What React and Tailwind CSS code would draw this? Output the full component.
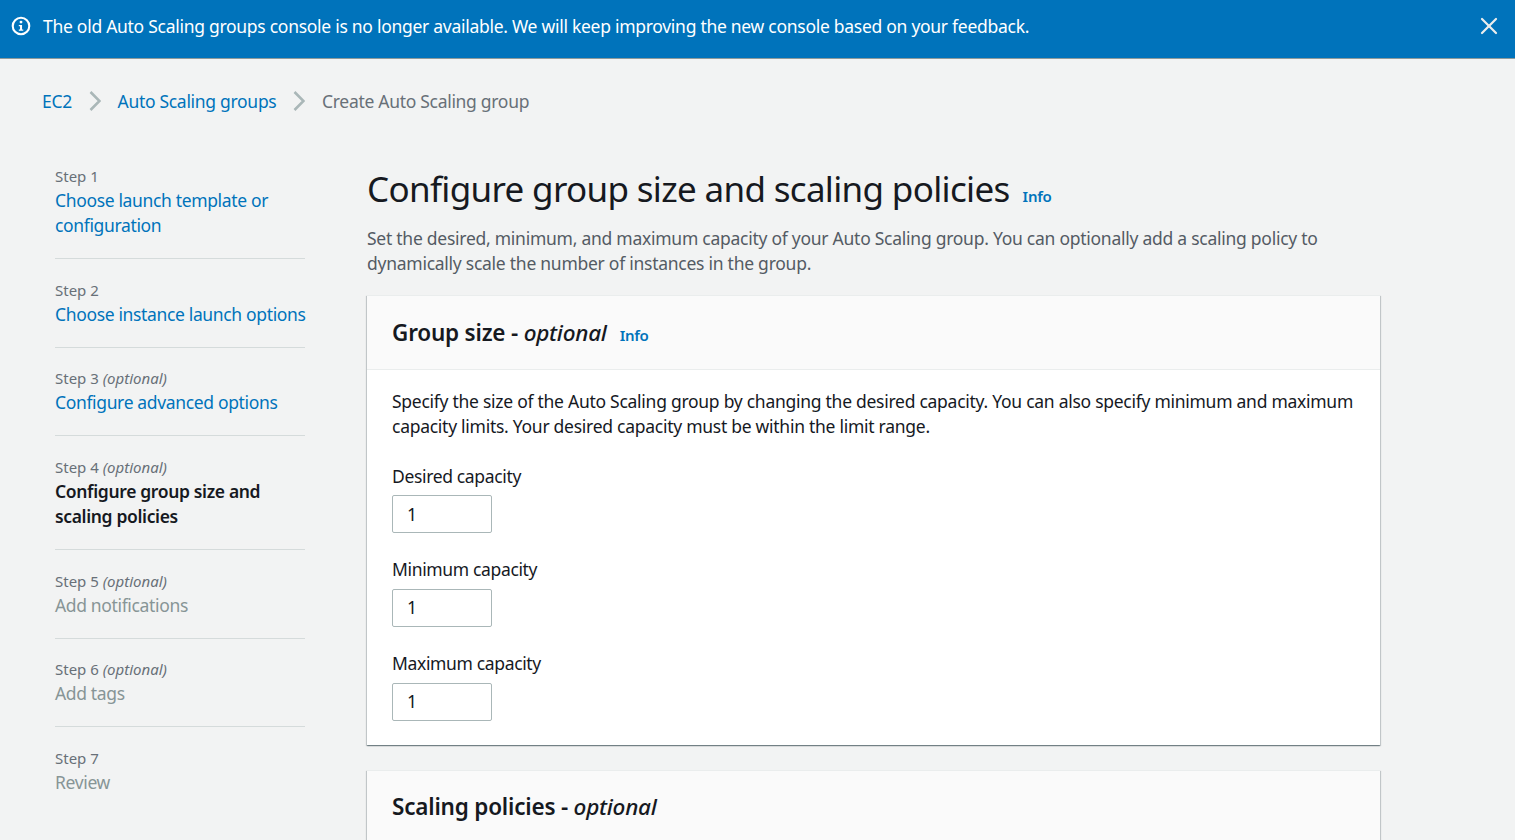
import { X } from 'lucide-react';

const steps = [
  { step: 'Step 1', title: 'Choose launch template or configuration', kind: 'link' },
  { step: 'Step 2', title: 'Choose instance launch options', kind: 'link' },
  { step: 'Step 3', optional: true, title: 'Configure advanced options', kind: 'link' },
  { step: 'Step 4', optional: true, title: 'Configure group size and scaling policies', kind: 'active' },
  { step: 'Step 5', optional: true, title: 'Add notifications', kind: 'off' },
  { step: 'Step 6', optional: true, title: 'Add tags', kind: 'off' },
  { step: 'Step 7', title: 'Review', kind: 'off' },
];

const titleColors = { link: 'text-[#0073bb]', active: 'font-semibold text-[#16191f]', off: 'text-[#879596]' };
const panelShadow = 'shadow-[0_1px_1px_0_rgba(0,28,36,0.35),1px_1px_1px_0_rgba(0,28,36,0.15),-1px_1px_1px_0_rgba(0,28,36,0.15)]';

function Chevron() {
  return (
    <svg width="12" height="20" viewBox="0 0 12 20" fill="none" className="mx-[16.8px] shrink-0">
      <path d="M1.5 1L10.5 10L1.5 19" stroke="#aab7b8" strokeWidth="2.6" />
    </svg>
  );
}

function Field({ label }) {
  return (
    <div className="mt-[24.2px]">
      <div className="text-[#16191f]">{label}</div>
      <div className="mt-[6.5px] flex h-[38px] w-[100px] items-center rounded-[2px] border border-[#aab7b8] bg-white pl-[14px] text-[#16191f]">1</div>
    </div>
  );
}

export default function App() {
  return (
    <div className="h-[840px] overflow-hidden bg-[#f2f3f3] font-['Noto_Sans',sans-serif] text-[17.5px] leading-[25px] tracking-[-0.35px]">
      <div className="flex h-[59px] items-center border-b border-[#8d9a9b] bg-[#0073bb] pr-[12px] pb-[6px] pl-[11px] text-white">
        <svg width="20" height="20" viewBox="0 0 21 21" fill="none" className="mr-[12px] shrink-0">
          <circle cx="10.5" cy="10.5" r="8.7" stroke="white" strokeWidth="2.2" />
          <circle cx="10.5" cy="6.4" r="1.5" fill="white" />
          <path d="M8.2 9.4H11.6V14.3H12.9V15.6H8.2V14.3H9.5V10.7H8.2Z" fill="white" />
        </svg>
        <span className="flex-1 tracking-[-0.28px]">The old Auto Scaling groups console is no longer available. We will keep improving the new console based on your feedback.</span>
        <X size={28} strokeWidth={1.9} className="text-[#eaeded]" />
      </div>

      <div className="flex h-[84px] items-center pl-[42px] tracking-[-0.3px]">
        <span className="text-[#0073bb]">EC2</span>
        <Chevron />
        <span className="text-[#0073bb]">Auto Scaling groups</span>
        <Chevron />
        <span className="text-[#687078]">Create Auto Scaling group</span>
      </div>

      <div className="flex">
        <nav className="ml-[55px] w-[250px] shrink-0 pt-[21px]">
          {steps.map((s, i) => (
            <div key={s.step} className={i < steps.length - 1 ? 'mb-[18.7px] border-b border-[#d5dbdb] pb-[20px]' : ''}>
              <div className="text-[15px] tracking-normal text-[#687078]">
                {s.step}{s.optional && <i> (optional)</i>}
              </div>
              <div className={`-mt-[1px] -mr-[4px] ${titleColors[s.kind]}`}>{s.title}</div>
            </div>
          ))}
        </nav>

        <main className="ml-[62px] w-[1013px] shrink-0">
          <h1 className="flex items-baseline pt-[21px] text-[35px] leading-[50px] tracking-[-0.67px] text-[#16191f]">
            Configure group size and scaling policies
            <span className="ml-[13px] text-[15px] font-semibold tracking-[-0.25px] text-[#0073bb]">Info</span>
          </h1>
          <p className="mt-[4.5px] tracking-[-0.26px] text-[#545b64]">
            Set the desired, minimum, and maximum capacity of your Auto Scaling group. You can optionally add a scaling policy to dynamically scale the number of instances in the group.
          </p>

          <section className={`mt-[19.5px] h-[450px] border-t border-[#eaeded] bg-white ${panelShadow}`}>
            <div className="flex h-[74px] items-baseline border-b border-[#eaeded] bg-[#fafafa] px-[25px] pt-[19px]">
              <h2 className="text-[22.5px] leading-[35px] font-semibold tracking-[-0.2px] text-[#16191f]">
                Group size - <i className="font-medium tracking-[-0.25px]">optional</i>
              </h2>
              <span className="ml-[13px] text-[15px] font-semibold tracking-[-0.25px] text-[#0073bb]">Info</span>
            </div>
            <div className="px-[25px] pt-[18.5px]">
              <p className="tracking-[-0.27px] text-[#16191f]">
                Specify the size of the Auto Scaling group by changing the desired capacity. You can also specify minimum and maximum capacity limits. Your desired capacity must be within the limit range.
              </p>
              <div className="pt-[1px]">
                <Field label="Desired capacity" />
                <Field label="Minimum capacity" />
                <Field label="Maximum capacity" />
              </div>
            </div>
          </section>

          <section className={`mt-[25px] h-[100px] border-t border-[#eaeded] bg-[#fafafa] px-[25px] pt-[18px] ${panelShadow}`}>
            <h2 className="text-[22.5px] leading-[35px] font-semibold tracking-[-0.2px] text-[#16191f]">
              Scaling policies - <i className="font-medium tracking-[-0.25px]">optional</i>
            </h2>
          </section>
        </main>
      </div>
    </div>
  );
}
